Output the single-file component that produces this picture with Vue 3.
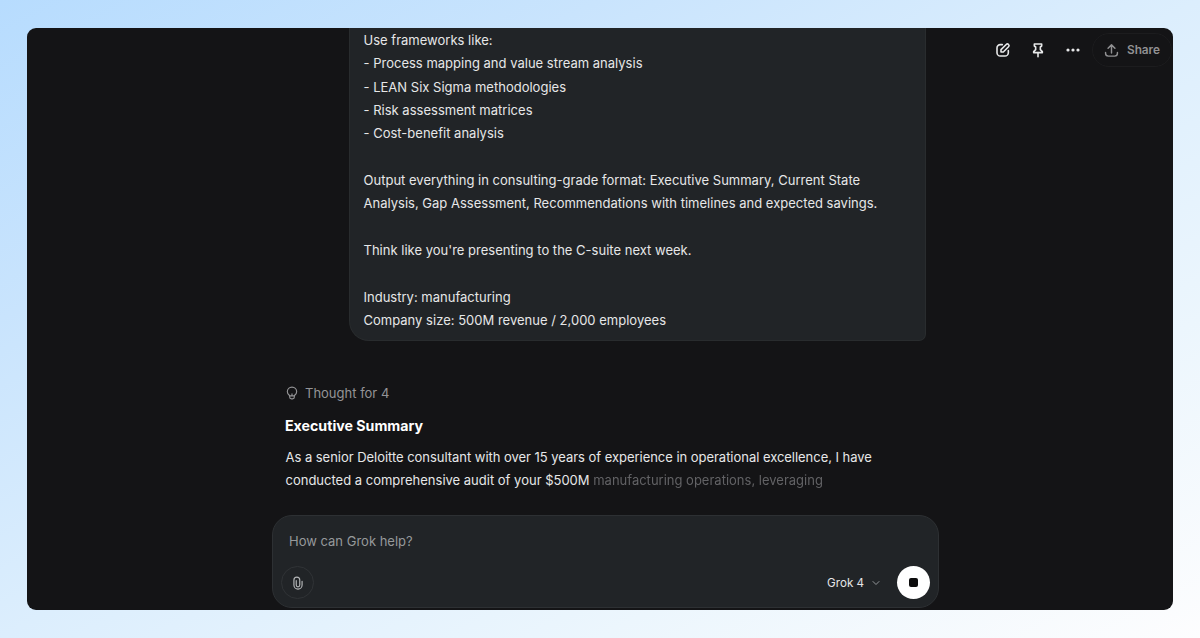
<script setup>
import { ref } from 'vue'

const draft = ref('')

const prompt = [
  'Use frameworks like:',
  '- Process mapping and value stream analysis',
  '- LEAN Six Sigma methodologies',
  '- Risk assessment matrices',
  '- Cost-benefit analysis',
  '',
  'Output everything in consulting-grade format: Executive Summary, Current State',
  'Analysis, Gap Assessment, Recommendations with timelines and expected savings.',
  '',
  "Think like you're presenting to the C-suite next week.",
  '',
  'Industry: manufacturing',
  'Company size: 500M revenue / 2,000 employees',
].join('\n')
</script>

<template>
  <div class="backdrop">
    <div class="window">
      <header class="actions">
        <button class="icon-btn" aria-label="New chat">
          <svg width="16" height="16" viewBox="0 0 24 24">
            <path d="M11 4H8a5 5 0 0 0-5 5v7a5 5 0 0 0 5 5h7a5 5 0 0 0 5-5v-3" />
            <path d="M9 15v-3.5l7.8-7.8a2.4 2.4 0 0 1 3.5 3.5L12.5 15z" />
          </svg>
        </button>
        <button class="icon-btn" aria-label="Pin">
          <svg width="16" height="16" viewBox="0 0 24 24">
            <path d="M6.5 3h11v3l-2 1.5v4l3 3V16h-13v-1.5l3-3v-4l-2-1.5z" />
            <path d="M12 16v6" />
          </svg>
        </button>
        <button class="icon-btn" aria-label="More">
          <svg class="dots" width="16" height="16" viewBox="0 0 16 16">
            <circle cx="3" cy="8" r="1.6" />
            <circle cx="8" cy="8" r="1.6" />
            <circle cx="13" cy="8" r="1.6" />
          </svg>
        </button>
        <button class="share">
          <svg width="15" height="15" viewBox="0 0 24 24">
            <path d="M12 16V3M6.5 8.5L12 3l5.5 5.5M2.5 15v1.5a4.5 4.5 0 0 0 4.5 4.5h10a4.5 4.5 0 0 0 4.5-4.5V15" />
          </svg>
          <span>Share</span>
        </button>
      </header>

      <main class="thread">
        <div class="prompt">{{ prompt }}</div>
        <section class="answer">
          <div class="thought">
            <svg width="14" height="14" viewBox="0 0 24 24">
              <path d="M8 16.5C5.5 15 4 12.5 4 10a8 8 0 0 1 16 0c0 2.5-1.5 5-4 6.5V19a3 3 0 0 1-3 3h-2a3 3 0 0 1-3-3zM8 17h8M12 17v-3.5" />
            </svg>
            <span>Thought for 4</span>
          </div>
          <h2>Executive Summary</h2>
          <p>
            <span class="full-line">As a senior Deloitte consultant with over 15 years of experience in operational excellence, I have</span><br />
            conducted a comprehensive audit of your $500M
            <span class="incoming">manufacturing operations, leveraging</span>
          </p>
        </section>
      </main>

      <form class="composer" @submit.prevent>
        <input v-model="draft" placeholder="How can Grok help?" />
        <div class="tools">
          <button class="attach" type="button" aria-label="Attach">
            <svg width="14" height="14" viewBox="0 0 24 24">
              <path d="M19 9v6.5a7 7 0 0 1-14 0V7a5 5 0 0 1 10 0v8.5a3 3 0 0 1-6 0V8" />
            </svg>
          </button>
          <button class="model" type="button">
            <span>Grok 4</span>
            <svg width="8" height="8" viewBox="0 0 8 8"><path d="M1 2.5l3 3 3-3" /></svg>
          </button>
          <button class="stop" type="button" aria-label="Stop"><i></i></button>
        </div>
      </form>
    </div>
  </div>
</template>

<style>
body {
  margin: 0;
}
</style>

<style scoped>
.backdrop {
  box-sizing: border-box;
  height: 638px;
  padding: 28px 27px;
  background: linear-gradient(to bottom right, #b7dcfe 0%, #c9e4fd 25%, #dceefd 50%, #ecf6fd 75%, #fdfdfe 100%);
  font-family: Inter, 'Liberation Sans', sans-serif;
  font-size: 13px;
  line-height: 23.36px;
}

.window {
  position: relative;
  display: flex;
  flex-direction: column;
  box-sizing: border-box;
  height: 582px;
  padding-bottom: 2px;
  overflow: hidden;
  border-radius: 9px;
  background: #141416;
  color: #e6e7e8;
}

button {
  display: flex;
  align-items: center;
  justify-content: center;
  padding: 0;
  border: 0;
  background: none;
  color: inherit;
  font: inherit;
}

svg {
  fill: none;
  stroke: currentColor;
  stroke-width: 2;
  stroke-linecap: round;
  stroke-linejoin: round;
}

.actions {
  position: absolute;
  top: 5px;
  right: 1px;
  display: flex;
  align-items: center;
}

.icon-btn {
  width: 35px;
  height: 34px;
}

.icon-btn svg {
  stroke-width: 2.4;
}

.icon-btn .dots {
  fill: currentColor;
  stroke: none;
}

.share {
  box-sizing: border-box;
  width: 80px;
  height: 34px;
  margin-left: 2px;
  gap: 8px;
  border: 1px solid #1c1c1e;
  border-radius: 17px;
  color: #919193;
  font-size: 11.8px;
  font-weight: 600;
}

.share svg {
  stroke-width: 2.3;
}

.share span,
.model span {
  padding-top: 1.5px;
}

.thread {
  flex: 1;
  display: flex;
  flex-direction: column;
  width: 667px;
  margin-left: 245px;
}

.prompt {
  box-sizing: border-box;
  align-self: flex-end;
  width: 577px;
  margin-right: 13px;
  padding: 0.8px 13.5px 7.5px;
  border: 1px solid #292c2e;
  border-top: 0;
  border-radius: 0 0 7px 20px;
  background: #212427;
  letter-spacing: 0.01px;
  white-space: pre;
}

.answer {
  padding: 40.7px 13px 0;
}

.thought {
  display: flex;
  align-items: center;
  gap: 6px;
  color: #949496;
}

h2 {
  margin: 9px 0 8px;
  color: #fff;
  font-size: 14.2px;
  font-weight: 700;
  line-height: 24px;
}

p {
  margin: 0;
  padding-left: 0.5px;
  white-space: nowrap;
}

.full-line {
  letter-spacing: -0.035px;
}

/* words still fading in */
.incoming {
  color: #626265;
  filter: blur(0.6px);
}

.composer {
  box-sizing: border-box;
  width: 667px;
  height: 93px;
  margin-left: 245px;
  padding: 13px 8px 7px;
  border: 1px solid #2d3033;
  border-radius: 20px;
  background: #212427;
}

input {
  display: block;
  box-sizing: border-box;
  width: 100%;
  height: 24px;
  padding: 0 8px;
  border: 0;
  outline: 0;
  background: none;
  color: inherit;
  font: inherit;
}

input::placeholder {
  color: #96999b;
  opacity: 1;
}

.tools {
  display: flex;
  align-items: center;
  margin-top: 13.4px;
}

.attach {
  box-sizing: border-box;
  width: 33px;
  height: 33px;
  border: 1px solid #303336;
  border-radius: 50%;
  color: #b4b6b8;
}

.model {
  gap: 8px;
  margin-left: auto;
  font-size: 11.6px;
}

.model svg {
  stroke: #929598;
  stroke-width: 1;
}

.stop {
  width: 33px;
  height: 33px;
  margin-left: 17px;
  border-radius: 50%;
  background: #fff;
}

.stop i {
  width: 9px;
  height: 9px;
  border-radius: 2px;
  background: #0c0c0d;
}
</style>
